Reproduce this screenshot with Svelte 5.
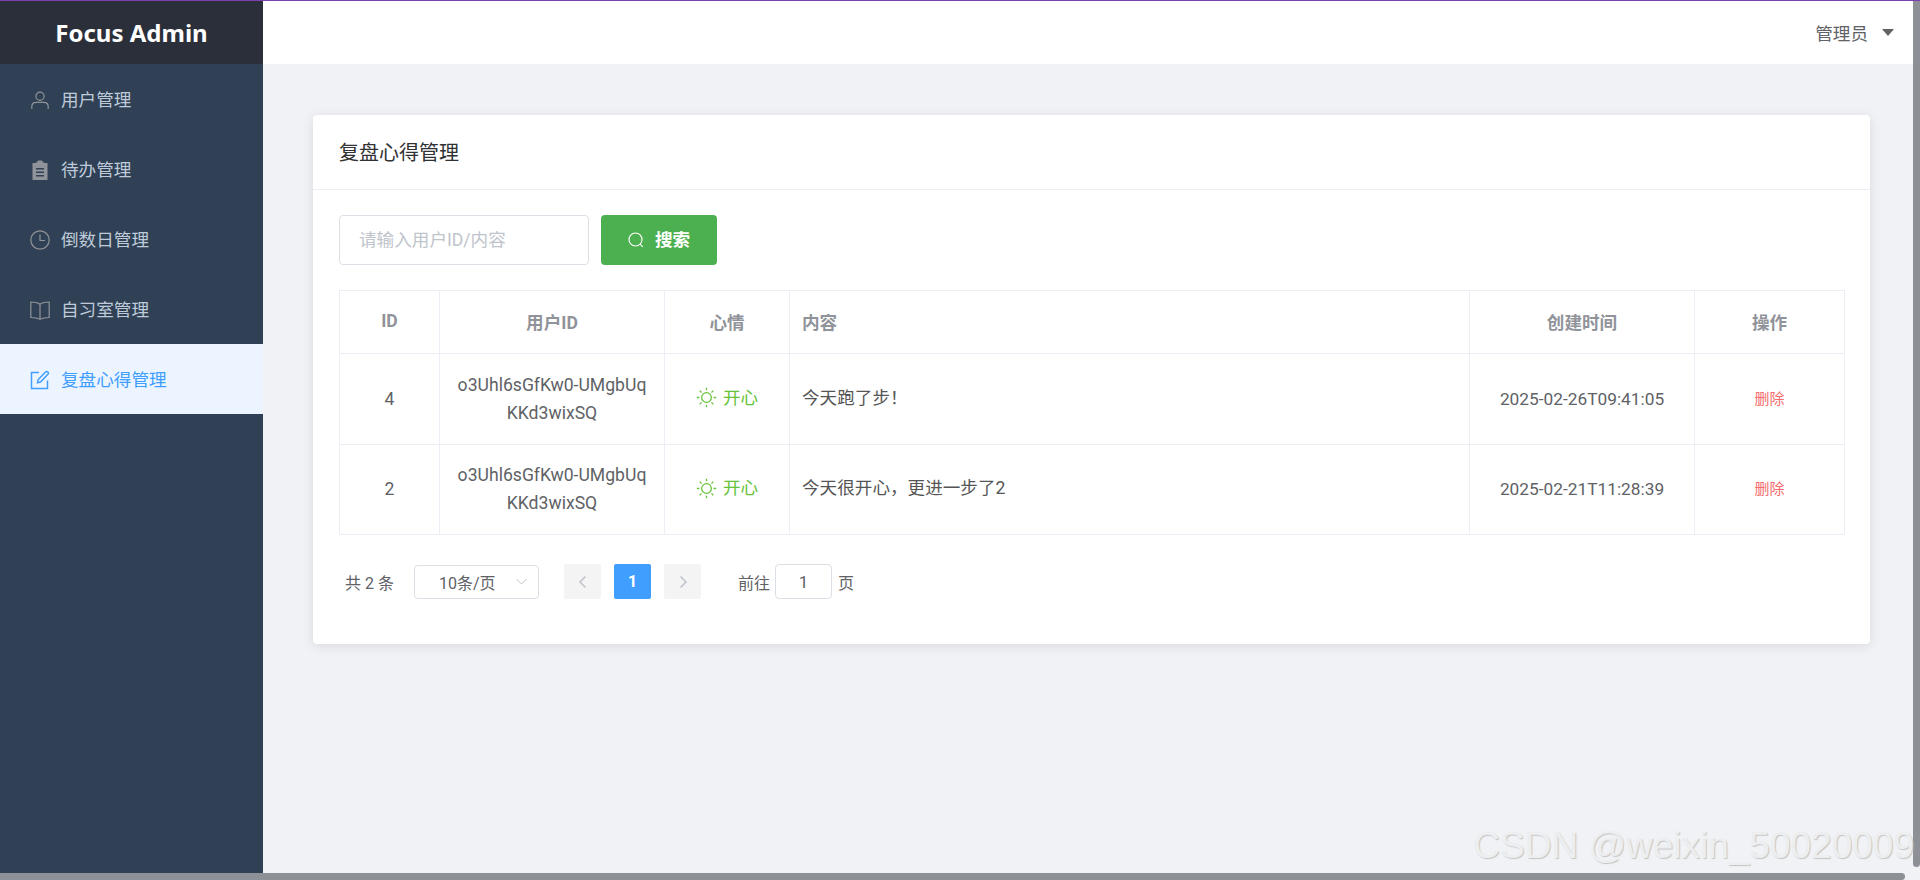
<script lang="ts">
  const menu = [
    { label: "用户管理", icon: "user" },
    { label: "待办管理", icon: "clipboard" },
    { label: "倒数日管理", icon: "clock" },
    { label: "自习室管理", icon: "book" },
    { label: "复盘心得管理", icon: "edit", active: true }
  ]

  const rows = [
    { id: 4, user: "o3Uhl6sGfKw0-UMgbUqKKd3wixSQ", mood: "开心", content: "今天跑了步！", time: "2025-02-26T09:41:05" },
    { id: 2, user: "o3Uhl6sGfKw0-UMgbUqKKd3wixSQ", mood: "开心", content: "今天很开心，更进一步了2", time: "2025-02-21T11:28:39" }
  ]
</script>

<div class="page">
  <aside class="sidebar">
    <div class="logo">Focus Admin</div>
    <nav>
      {#each menu as item}
        <div class="menu-item" class:active={item.active}>
          <svg class="menu-icon" viewBox="0 0 20 20" fill="none" stroke="currentColor" stroke-width="1.2">
            {#if item.icon === "user"}
              <circle cx="10" cy="6.2" r="4.1" />
              <path d="M1.8 19v-2.5c0-2.6 2-4.2 4.4-4.2h7.6c2.4 0 4.4 1.600 4.400 4.200V19" />
            {:else if item.icon === "clipboard"}
              <path fill="currentColor" stroke="none" fill-rule="evenodd" d="M2.500 3H6.500V1.500H8V.5h4v1h1.500V3h4v17h-15zM6 8v1.500h8V8zM6 11.500V13h8v-1.500zM6 15v1.500h8V15z" />
            {:else if item.icon === "clock"}
              <circle cx="10" cy="10" r="9.200" />
              <path d="M10 4.500v6h5" />
            {:else if item.icon === "book"}
              <path d="M10 4.200C7.500 2.500 4 2 .8 2v15.500c3.200 0 6.700.4 9.200 1.800 2.500-1.400 6-1.800 9.200-1.800V2C16 2 12.500 2.500 10 4.200zM10 4.200v15" />
            {:else}
              <path d="M9 2.500H1.500v16h16V10.500" stroke-width="1.500" />
              <path d="M7.500 12.800l.7-3.300L15.600 2c.7-.7 1.700-.7 2.300 0 .7.700.7 1.700 0 2.300l-7.400 7.700z" stroke-width="1.500" />
            {/if}
          </svg>
          <span class="menu-label">{item.label}</span>
        </div>
      {/each}
    </nav>
  </aside>

  <div class="body-col">
    <header class="topbar">
      <span class="admin">管理员</span>
      <span class="caret"></span>
    </header>

    <main class="main">
      <section class="card">
        <div class="card-header">复盘心得管理</div>
        <div class="card-body">
          <div class="search-bar">
            <input class="search-input" type="text" placeholder="请输入用户ID/内容" />
            <button class="search-btn">
              <svg width="16" height="16" viewBox="0 0 16 16" fill="none" stroke="currentColor" stroke-width="1.200">
                <circle cx="7.500" cy="7.500" r="6.500" />
                <path d="M12.300 12.300l2.500 2.500" />
              </svg>
              <span class="btn-label">搜索</span>
            </button>
          </div>

          <table class="table">
            <colgroup>
              <col style="width: 100px" />
              <col style="width: 225px" />
              <col style="width: 125px" />
              <col />
              <col style="width: 225px" />
              <col style="width: 150px" />
            </colgroup>
            <thead>
              <tr>
                <th>ID</th>
                <th>用户ID</th>
                <th>心情</th>
                <th class="left">内容</th>
                <th>创建时间</th>
                <th>操作</th>
              </tr>
            </thead>
            <tbody>
              {#each rows as row}
                <tr>
                  <td>{row.id}</td>
                  <td class="user-cell">{row.user}</td>
                  <td>
                    <span class="mood">
                      <svg width="21" height="21" viewBox="0 0 20 20" fill="none" stroke="currentColor" stroke-width="1.200">
                        <circle cx="10" cy="10" r="4.600" />
                        <path d="M10 .8v2.400M10 16.800v2.400M.8 10h2.400M16.800 10h2.400M3.500 3.500l1.700 1.700M14.800 14.800l1.700 1.700M3.500 16.500l1.700-1.700M14.800 5.200l1.700-1.700" />
                      </svg>
                      {row.mood}
                    </span>
                  </td>
                  <td class="left content">{row.content}</td>
                  <td class="time">{row.time}</td>
                  <td><span class="del">删除</span></td>
                </tr>
              {/each}
            </tbody>
          </table>

          <div class="pager">
            <span class="total">共 2 条</span>
            <div class="size-select">
              <span>10条/页</span>
              <svg width="13" height="13" viewBox="0 0 13 13" fill="none" stroke="#c0c4cc" stroke-width="1">
                <path d="M1.500 4l5 5 5-5" />
              </svg>
            </div>
            <div class="page-btn prev">
              <svg width="12" height="14" viewBox="0 0 12 14" fill="none" stroke="#c0c4cc" stroke-width="1.600"><path d="M8.500 1.500L3 7l5.500 5.500" /></svg>
            </div>
            <div class="page-btn current">1</div>
            <div class="page-btn">
              <svg width="12" height="14" viewBox="0 0 12 14" fill="none" stroke="#c0c4cc" stroke-width="1.600"><path d="M3.500 1.500L9 7l-5.500 5.500" /></svg>
            </div>
            <span class="goto">前往</span>
            <div class="goto-input">1</div>
            <span class="goto-suffix">页</span>
          </div>
        </div>
      </section>
    </main>
  </div>

  <!-- overlays: screenshot scrollbars and watermark -->
  <div class="scroll-y"></div>
  <div class="scroll-x"></div>
  <div class="watermark">CSDN @weixin_50020009</div>
</div>

<style>
  :global(body) {
    margin: 0;
    overflow: hidden;
  }

  .page {
    position: relative;
    display: flex;
    width: 1920px;
    height: 880px;
    box-sizing: border-box;
    overflow: hidden;
    border-top: 1px solid #7b3fb0;
    background: #f0f2f5;
    font-family: Roboto, "Noto Sans CJK SC", sans-serif;
    font-size: 17.600px;
    color: #606266;
  }

  .sidebar {
    width: 263px;
    flex-shrink: 0;
    background: #304156;
    display: flex;
    flex-direction: column;
  }

  .logo {
    height: 63px;
    background: #2b2f3a;
    color: #fff;
    font-family: "Noto Sans", sans-serif;
    font-size: 24px;
    font-weight: 700;
    display: flex;
    align-items: center;
    justify-content: center;
  }

  .menu-item {
    height: 70px;
    display: flex;
    align-items: center;
    padding-left: 30px;
    gap: 11px;
    color: #bfcbd9;
  }

  .menu-label {
    padding-bottom: 2px;
  }

  .menu-icon {
    width: 20px;
    height: 20px;
    margin-top: 1px;
    color: #909399;
    flex-shrink: 0;
  }

  .menu-item.active {
    background: #ecf5ff;
    color: #409eff;
  }

  .menu-item.active .menu-icon {
    color: #409eff;
  }

  .body-col {
    flex: 1;
    min-width: 0;
    display: flex;
    flex-direction: column;
  }

  .topbar {
    height: 63px;
    flex-shrink: 0;
    background: #fff;
    display: flex;
    align-items: center;
    justify-content: flex-end;
    padding-right: 26px;
    gap: 14px;
  }

  .caret {
    width: 0;
    height: 0;
    border-left: 6px solid transparent;
    border-right: 6px solid transparent;
    border-top: 7px solid #606266;
  }

  .main {
    padding: 51px 50px 0 50px;
  }

  .card {
    height: 529px;
    background: #fff;
    border-radius: 4px;
    box-shadow: 0 2px 12px rgba(0, 0, 0, 0.1);
  }

  .card-header {
    height: 75px;
    box-sizing: border-box;
    padding: 0 0 1px 26px;
    display: flex;
    align-items: center;
    border-bottom: 1px solid #ebeef5;
    font-size: 20px;
    color: #303133;
  }

  .card-body {
    padding: 25px 0 0 26px;
  }

  .search-bar {
    display: flex;
    gap: 12px;
    margin-bottom: 25px;
  }

  .search-input {
    width: 250px;
    height: 50px;
    box-sizing: border-box;
    border: 1px solid #dcdfe6;
    border-radius: 4px;
    padding: 0 19px;
    font: inherit;
    outline: none;
  }

  .search-input::placeholder {
    color: #c0c4cc;
  }

  .search-btn {
    width: 116px;
    height: 50px;
    border: none;
    border-radius: 4px;
    background: #4caf50;
    color: #fff;
    font: inherit;
    font-weight: 700;
    display: flex;
    align-items: center;
    justify-content: center;
    gap: 11px;
    padding: 0;
  }

  .btn-label {
    padding-bottom: 3px;
  }

  .table {
    width: 1506px;
    border-collapse: collapse;
    table-layout: fixed;
  }

  th,
  td {
    border: 1px solid #ebeef5;
    text-align: center;
    padding: 0 12px;
  }

  th {
    height: 60px;
    padding-bottom: 2px;
    color: #909399;
    font-weight: 700;
  }

  td {
    height: 87.500px;
    line-height: 28px;
    color: #606266;
  }

  .left {
    text-align: left;
  }

  .user-cell {
    word-break: break-all;
    padding: 0 17px;
  }

  .content {
    padding-bottom: 2px;
    color: #555;
  }

  .time {
    font-size: 17.300px;
  }

  .mood {
    display: inline-flex;
    align-items: center;
    gap: 6px;
    margin-top: 2px;
    color: #67c23a;
  }

  .del {
    display: block;
    color: #f56c6c;
    font-size: 15px;
  }

  .pager {
    display: flex;
    align-items: center;
    height: 35px;
    margin-top: 29px;
    font-size: 16px;
  }

  .total {
    margin-left: 6px;
    width: 69px;
  }

  .size-select {
    width: 125px;
    height: 34px;
    box-sizing: border-box;
    border: 1px solid #dcdfe6;
    border-radius: 4px;
    padding: 0 10px 0 24px;
    display: flex;
    align-items: center;
    justify-content: space-between;
    margin-right: 25px;
  }

  .page-btn {
    width: 37px;
    height: 35px;
    border-radius: 2px;
    background: #f4f4f5;
    display: flex;
    align-items: center;
    justify-content: center;
    margin-right: 13px;
  }

  .page-btn.current {
    background: #409eff;
    color: #fff;
    font-weight: 700;
  }

  .goto {
    margin-left: 24px;
    margin-right: 5px;
  }

  .goto-input {
    width: 57px;
    height: 35px;
    box-sizing: border-box;
    border: 1px solid #dcdfe6;
    border-radius: 4px;
    display: flex;
    align-items: center;
    justify-content: center;
    font-size: 17px;
  }

  .goto-suffix {
    margin-left: 6px;
  }

  .scroll-y {
    position: absolute;
    top: 0;
    right: 0;
    width: 7px;
    height: 866px;
    border-radius: 0 0 4px 4px;
    background: #8e9097;
  }

  .scroll-x {
    position: absolute;
    left: 0;
    bottom: 0;
    width: 1905px;
    height: 7px;
    border-radius: 0 4px 4px 0;
    background: #8e9097;
  }

  .watermark {
    position: absolute;
    right: 6px;
    bottom: 14px;
    font-family: "Liberation Sans", sans-serif;
    font-size: 37px;
    line-height: 40px;
    color: #eceef0;
    text-shadow: 1px 1px 1px #c4c4c4;
  }
</style>
